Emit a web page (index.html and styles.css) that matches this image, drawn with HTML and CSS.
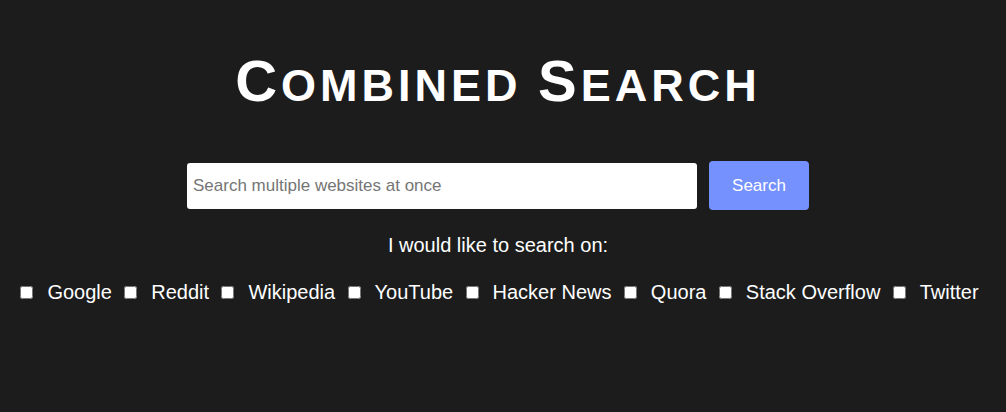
FILE: index.html
```html
<!DOCTYPE html>
<html lang="en">
<head>
    <meta charset="UTF-8">
    <meta name="viewport" content="width=device-width, initial-scale=1.0">
    <title>Combined Search</title>
    <link rel="stylesheet" href="styles.css">
</head>
<body>
    <div class="container">
        <h1><span class="cap">C</span>ombined <span class="cap">S</span>earch</h1>
        <form class="search-bar" onsubmit="return false">
            <input type="text" id="query" placeholder="Search multiple websites at once">
            <button type="submit">Search</button>
        </form>
        <p class="prompt">I would like to search on:</p>
        <div class="sites">
            <label class="site"><input type="checkbox"><span>Google</span></label>
            <label class="site"><input type="checkbox"><span>Reddit</span></label>
            <label class="site"><input type="checkbox"><span>Wikipedia</span></label>
            <label class="site"><input type="checkbox"><span>YouTube</span></label>
            <label class="site"><input type="checkbox"><span>Hacker News</span></label>
            <label class="site"><input type="checkbox"><span>Quora</span></label>
            <label class="site"><input type="checkbox"><span>Stack Overflow</span></label>
            <label class="site"><input type="checkbox"><span>Twitter</span></label>
        </div>
    </div>
</body>
</html>
```

FILE: styles.css
```css
body {
    font-family: 'Liberation Sans', Arial, sans-serif;
    background: #1c1c1c;
    color: #fff;
    margin: 0;
}

.container {
    display: flex;
    flex-direction: column;
    align-items: center;
    padding: 46px 10px 0 0;
}

/* small caps drawn by hand, lowercase letters at ~78% */
h1 {
    font-size: 45px;
    line-height: 70px;
    font-weight: bold;
    text-transform: uppercase;
    letter-spacing: 4px;
    margin: 0 0 40px;
}

h1 .cap {
    font-size: 58px;
}

.search-bar {
    display: flex;
    align-items: center;
    gap: 12px;
}

.search-bar input {
    width: 510px;
    height: 46px;
    box-sizing: border-box;
    padding: 0 6px;
    border: none;
    border-radius: 3px;
    background: #fff;
    font-family: inherit;
    font-size: 17px;
    color: #222;
}

.search-bar input::placeholder {
    color: #757575;
}

.search-bar input:focus {
    outline: none;
}

.search-bar button {
    width: 100px;
    height: 49px;
    border: none;
    border-radius: 4px;
    background-color: #7591fe;
    color: #fff;
    font-family: inherit;
    font-size: 17px;
    cursor: pointer;
}

.search-bar button:hover {
    background-color: #5f7cf5;
}

.prompt {
    font-size: 20px;
    line-height: 24px;
    margin: 23px 0 23px;
}

.sites {
    display: flex;
    gap: 12.4px;
    margin-left: 3px;
}

.site {
    display: flex;
    align-items: center;
    font-size: 20px;
    line-height: 24px;
}

.site input {
    width: 13px;
    height: 13px;
    margin: 0 14px 0 0;
}
```
